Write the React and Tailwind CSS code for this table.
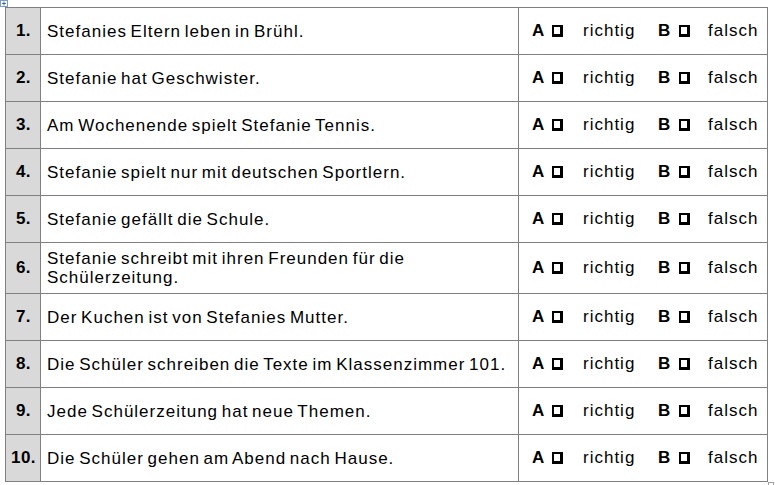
const rows = [
  'Stefanies Eltern leben in Brühl.',
  'Stefanie hat Geschwister.',
  'Am Wochenende spielt Stefanie Tennis.',
  'Stefanie spielt nur mit deutschen Sportlern.',
  'Stefanie gefällt die Schule.',
  'Stefanie schreibt mit ihren Freunden für die Schülerzeitung.',
  'Der Kuchen ist von Stefanies Mutter.',
  'Die Schüler schreiben die Texte im Klassenzimmer 101.',
  'Jede Schülerzeitung hat neue Themen.',
  'Die Schüler gehen am Abend nach Hause.',
];

function Box() {
  return <span className="block w-[11px] h-[12px] shrink-0 border-2 border-black border-r-[3px] border-b-[3px] bg-white" />;
}

export default function App() {
  return (
    <div className="relative min-h-[485px] w-[775px] bg-white pt-[7px] pl-[5px] font-['Liberation_Sans',Arial,sans-serif] text-black text-[17px] tracking-[1px]">
      <svg className="absolute left-0 top-0" width="8" height="7" viewBox="0 0 8 7">
        <rect x="0.5" y="0.5" width="7" height="6" fill="white" stroke="#7a9cd3" />
        <path d="M4 1.5v4M2 3.5h4" stroke="#3a6fc4" strokeWidth="1" />
      </svg>
      <table className="border-collapse w-[762px] table-fixed">
        <colgroup>
          <col className="w-[35px]" />
          <col className="w-[478px]" />
          <col className="w-[249px]" />
        </colgroup>
        <tbody>
          {rows.map((text, i) => (
            <tr key={i} className={i === 5 ? 'h-[51px]' : 'h-[47px]'}>
              <td className="border border-[#808080] bg-[#d9d9d9] text-center font-bold tracking-[0.5px] pl-[1px]">{i + 1}.</td>
              <td className="border border-[#808080] pl-[6px] pr-2 leading-[19px] [word-spacing:-2px]">
                {i === 5 ? (
                  <>Stefanie schreibt mit ihren Freunden für die<br />Schülerzeitung.</>
                ) : text}
              </td>
              <td className="border border-[#808080]">
                <div className="flex items-center pl-[13px]">
                  <span className="w-[10px] font-bold tracking-normal">A</span>
                  <span className="ml-[10px] flex items-center"><Box /></span>
                  <span className="ml-[20px] w-[75px]">richtig</span>
                  <span className="w-[11px] font-bold tracking-normal">B</span>
                  <span className="ml-[10px] flex items-center"><Box /></span>
                  <span className="ml-[18px]">falsch</span>
                </div>
              </td>
            </tr>
          ))}
        </tbody>
      </table>
      <span className="absolute left-[768px] top-[482px] w-[6px] h-[6px] border border-[#a0a0a0] bg-white" />
    </div>
  );
}
